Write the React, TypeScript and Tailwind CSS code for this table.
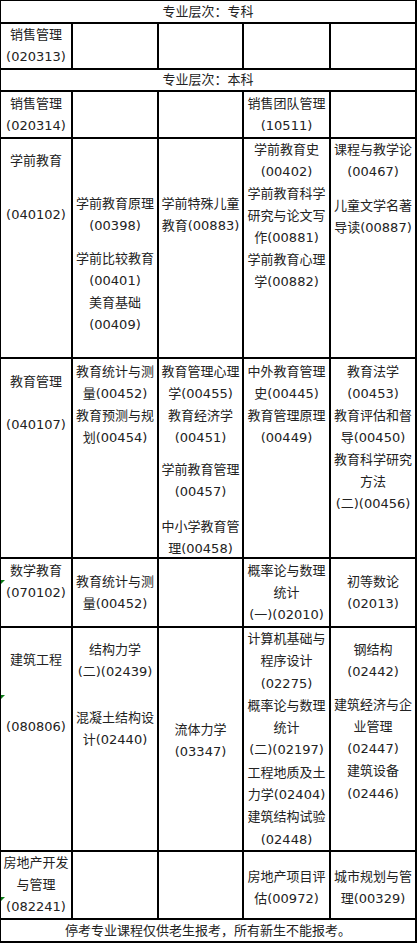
import React from "react";

function Line({ children, wide }: { children: React.ReactNode; wide?: boolean }) {
  return (
    <div className={wide ? "leading-[22.3px] whitespace-nowrap" : "leading-[22px] whitespace-nowrap"}>
      {children}
    </div>
  );
}

function Cell({ children, className = "" }: { children?: React.ReactNode; className?: string }) {
  return (
    <div className={"relative bg-white flex flex-col items-center text-center " + className}>
      {children}
    </div>
  );
}

function Mark({ className }: { className: string }) {
  return (
    <span
      className={
        "absolute left-0 w-0 h-0 border-t-[4px] border-r-[4px] border-t-[#0b7d16] border-r-transparent " +
        className
      }
    />
  );
}

export default function App() {
  return (
    <div
      className="w-[417px] h-[943px] bg-black grid grid-cols-[70px_84px_83px_85px_84px] grid-rows-[21px_44px_20px_45px_218px_198px_67px_222px_66px_21px] gap-[2px] pt-[1px] pl-[1px] pr-[2px] pb-[2px] text-[13px] text-[#222]"
      style={{ fontFamily: '"DejaVu Sans", "Noto Sans CJK SC", sans-serif' }}
    >
      {/* header 1 */}
      <div className="col-span-5 bg-white flex items-center justify-center leading-[21px]">专业层次：专科</div>

      {/* 020313 */}
      <Cell className="justify-center">
        <Line>销售管理</Line>
        <Line>(020313)</Line>
      </Cell>
      <Cell />
      <Cell />
      <Cell />
      <Cell />

      {/* header 2 */}
      <div className="col-span-5 bg-white flex items-center justify-center leading-[20px]">专业层次：本科</div>

      {/* 020314 */}
      <Cell className="justify-center">
        <Line>销售管理</Line>
        <Line>(020314)</Line>
      </Cell>
      <Cell />
      <Cell />
      <Cell className="justify-center">
        <Line>销售团队管理</Line>
        <Line>(10511)</Line>
      </Cell>
      <Cell />

      {/* 学前教育 */}
      <Cell className="pt-[11px]">
        <Line>学前教育</Line>
        <div className="mt-[32px]">
          <Line>(040102)</Line>
        </div>
      </Cell>
      <Cell className="pt-[54px]">
        <Line>学前教育原理</Line>
        <Line>(00398)</Line>
        <div className="mt-[11px]">
          <Line>学前比较教育</Line>
          <Line>(00401)</Line>
          <Line>美育基础</Line>
          <Line>(00409)</Line>
        </div>
      </Cell>
      <Cell className="pt-[54px]">
        <Line>学前特殊儿童</Line>
        <Line>教育(00883)</Line>
      </Cell>
      <Cell>
        <Line>学前教育史</Line>
        <Line>(00402)</Line>
        <Line>学前教育科学</Line>
        <Line>研究与论文写</Line>
        <Line>作(00881)</Line>
        <Line>学前教育心理</Line>
        <Line>学(00882)</Line>
      </Cell>
      <Cell>
        <Line>课程与教学论</Line>
        <Line>(00467)</Line>
        <div className="mt-[12px]">
          <Line>儿童文学名著</Line>
          <Line>导读(00887)</Line>
        </div>
      </Cell>

      {/* 教育管理 */}
      <Cell className="pt-[12px]">
        <Line>教育管理</Line>
        <div className="mt-[21px]">
          <Line>(040107)</Line>
        </div>
      </Cell>
      <Cell className="pt-[2px]">
        <Line>教育统计与测</Line>
        <Line>量(00452)</Line>
        <Line>教育预测与规</Line>
        <Line>划(00454)</Line>
      </Cell>
      <Cell className="pt-[2px]">
        <Line>教育管理心理</Line>
        <Line>学(00455)</Line>
        <Line>教育经济学</Line>
        <Line>(00451)</Line>
        <div className="mt-[10px]">
          <Line>学前教育管理</Line>
          <Line>(00457)</Line>
        </div>
        <div className="mt-[13px]">
          <Line>中小学教育管</Line>
          <Line>理(00458)</Line>
        </div>
      </Cell>
      <Cell className="pt-[2px]">
        <Line>中外教育管理</Line>
        <Line>史(00445)</Line>
        <Line>教育管理原理</Line>
        <Line>(00449)</Line>
      </Cell>
      <Cell className="pt-[2px]">
        <Line>教育法学</Line>
        <Line>(00453)</Line>
        <Line>教育评估和督</Line>
        <Line>导(00450)</Line>
        <Line>教育科学研究</Line>
        <Line>方法</Line>
        <Line>(二)(00456)</Line>
      </Cell>

      {/* 数学教育 */}
      <Cell className="pt-[1px]">
        <Mark className="top-[21px]" />
        <Line>数学教育</Line>
        <Line>(070102)</Line>
      </Cell>
      <Cell className="justify-center">
        <Line>教育统计与测</Line>
        <Line>量(00452)</Line>
      </Cell>
      <Cell />
      <Cell className="justify-center">
        <Line>概率论与数理</Line>
        <Line>统计</Line>
        <Line>(一)(02010)</Line>
      </Cell>
      <Cell className="justify-center">
        <Line>初等数论</Line>
        <Line>(02013)</Line>
      </Cell>

      {/* 建筑工程 */}
      <Cell className="pt-[21px]">
        <Mark className="top-[67px]" />
        <Line>建筑工程</Line>
        <div className="mt-[45px]">
          <Line>(080806)</Line>
        </div>
      </Cell>
      <Cell className="pt-[11px]">
        <Line>结构力学</Line>
        <Line>(二)(02439)</Line>
        <div className="mt-[24px]">
          <Line>混凝土结构设</Line>
          <Line>计(02440)</Line>
        </div>
      </Cell>
      <Cell className="pt-[91px]">
        <Line>流体力学</Line>
        <Line>(03347)</Line>
      </Cell>
      <Cell>
        <Line wide>计算机基础与</Line>
        <Line wide>程序设计</Line>
        <Line wide>(02275)</Line>
        <Line wide>概率论与数理</Line>
        <Line wide>统计</Line>
        <Line wide>(二)(02197)</Line>
        <Line wide>工程地质及土</Line>
        <Line wide>力学(02404)</Line>
        <Line wide>建筑结构试验</Line>
        <Line wide>(02448)</Line>
      </Cell>
      <Cell className="pt-[11px]">
        <Line wide>钢结构</Line>
        <Line wide>(02442)</Line>
        <div className="mt-[10px]">
          <Line wide>建筑经济与企</Line>
          <Line wide>业管理</Line>
          <Line wide>(02447)</Line>
          <Line wide>建筑设备</Line>
          <Line wide>(02446)</Line>
        </div>
      </Cell>

      {/* 房地产 */}
      <Cell>
        <Mark className="top-[45px]" />
        <Line>房地产开发</Line>
        <Line>与管理</Line>
        <Line>(082241)</Line>
      </Cell>
      <Cell />
      <Cell />
      <Cell className="pt-[14px]">
        <Line>房地产项目评</Line>
        <Line>估(00972)</Line>
      </Cell>
      <Cell className="pt-[14px]">
        <Line>城市规划与管</Line>
        <Line>理(00329)</Line>
      </Cell>

      {/* footer */}
      <div className="col-span-5 bg-white flex items-center justify-center leading-[21px]">
        停考专业课程仅供老生报考，所有新生不能报考。
      </div>
    </div>
  );
}
